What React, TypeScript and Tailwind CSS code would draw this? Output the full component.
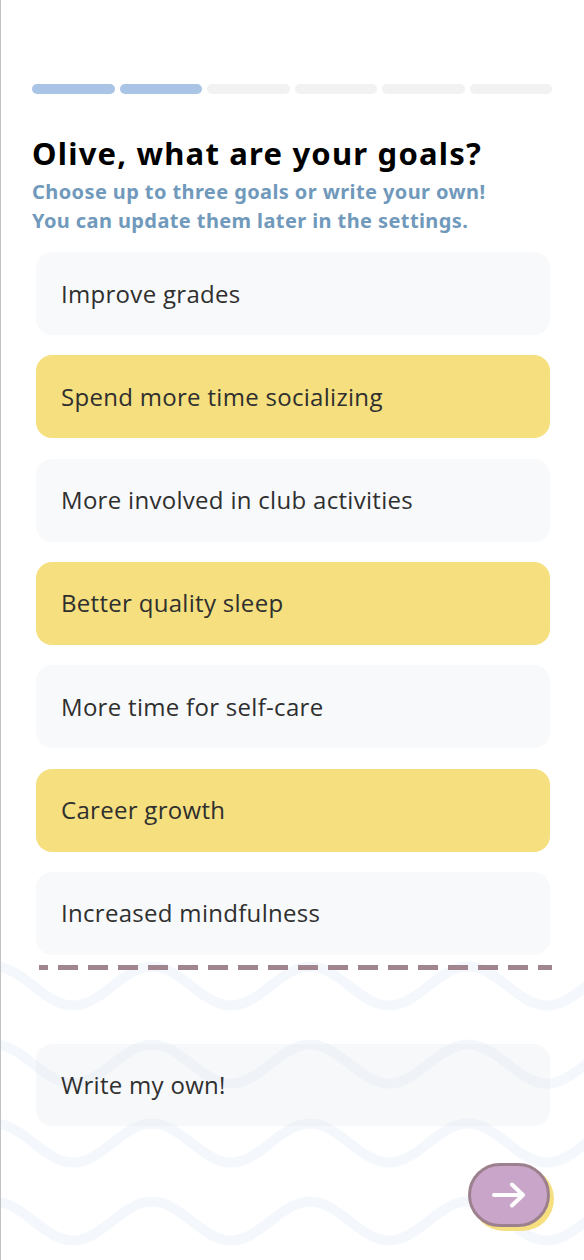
import React from "react";

const goals = [
  { label: "Improve grades", selected: false },
  { label: "Spend more time socializing", selected: true },
  { label: "More involved in club activities", selected: false },
  { label: "Better quality sleep", selected: true },
  { label: "More time for self-care", selected: false },
  { label: "Career growth", selected: true },
  { label: "Increased mindfulness", selected: false },
];

function wavePath(y0: number) {
  const P = 158;
  const A = 19.5;
  const pts: string[] = [];
  for (let x = -20; x <= 620; x += 4) {
    const y = y0 + A * Math.cos((2 * Math.PI * (x - 72)) / P);
    pts.push(`${x === -20 ? "M" : "L"}${x} ${y.toFixed(2)}`);
  }
  return pts.join(" ");
}

function Waves() {
  const rows = [46, 124, 203, 281];
  return (
    <svg
      className="absolute left-0 top-[940px] pointer-events-none"
      width="584"
      height="320"
      viewBox="0 0 584 320"
    >
      {rows.map((r) => (
        <path key={r} d={wavePath(r)} fill="none" stroke="#f4f8fd" strokeWidth="10" />
      ))}
    </svg>
  );
}

export default function App() {
  return (
    <div
      className="relative w-[584px] h-[1260px] overflow-hidden bg-white border-l border-[#c2c2c2]"
      style={{ fontFamily: "'Open Sans', 'Noto Sans', sans-serif" }}
    >
      <Waves />
      <div className="relative flex flex-col">
        <div className="flex gap-[5px] pl-[31px] pr-[32px] pt-[84px]">
          {[0, 1, 2, 3, 4, 5].map((i) => (
            <div
              key={i}
              className={`flex-1 h-[10px] rounded-full ${i < 2 ? "bg-[#a9c4e4]" : "bg-[#f2f2f2]"}`}
            />
          ))}
        </div>
        <h1
          className="ml-[31px] mt-[39px] text-[31px] leading-[40px] tracking-[1.2px] font-bold text-black"
          style={{ fontFamily: "'Noto Sans', sans-serif" }}
        >
          Olive, what are your goals?
        </h1>
        <p
          className="ml-[31px] mt-[4px] text-[20px] leading-[29px] tracking-[0.4px] font-bold text-[#7099bb]"
          style={{ fontFamily: "'Noto Sans', sans-serif" }}
        >
          Choose up to three goals or write your own!
          <br />
          You can update them later in the settings.
        </p>
        <div className="ml-[35px] w-[514px] mt-[17px] flex flex-col gap-[20.33px]">
          {goals.map((g) => (
            <div
              key={g.label}
              className={`h-[83px] rounded-[16px] flex items-center pl-[25px] text-[24px] tracking-[0.3px] text-[#2f2f2f] ${
                g.selected ? "bg-[#f5df7e]" : "bg-[#f8f9fb]"
              }`}
            >
              {g.label}
            </div>
          ))}
        </div>
        <svg className="ml-0 mt-[10px]" width="584" height="5" viewBox="0 0 584 5">
          <line
            x1="38"
            y1="2.5"
            x2="551"
            y2="2.5"
            stroke="#a0858f"
            strokeWidth="5"
            strokeDasharray="20 10"
            strokeDashoffset="11"
            strokeLinecap="butt"
          />
        </svg>
        <div className="ml-[35px] w-[514px] mt-[74px] h-[82px] rounded-[16px] flex items-center pl-[25px] text-[24px] tracking-[0.3px] text-[#2f2f2f] bg-[rgba(223,227,235,0.25)]">
          Write my own!
        </div>
        <div className="flex justify-end pr-[34px] mt-[37px]">
          <div className="relative w-[82px] h-[64px]">
            <div className="absolute left-[4px] top-[4px] w-[82px] h-[64px] rounded-full bg-[#f5df7e]" />
            <button className="relative w-[82px] h-[64px] rounded-full bg-[#c9a6c9] border-[3px] border-[#9c808d] flex items-center justify-center">
              <svg width="36" height="28" viewBox="0 0 36 28" fill="none">
                <path
                  d="M3 14 H32 M21 3.5 L32 14 L21 24.5"
                  stroke="white"
                  strokeWidth="4"
                  strokeLinecap="round"
                  strokeLinejoin="round"
                />
              </svg>
            </button>
          </div>
        </div>
      </div>
    </div>
  );
}
